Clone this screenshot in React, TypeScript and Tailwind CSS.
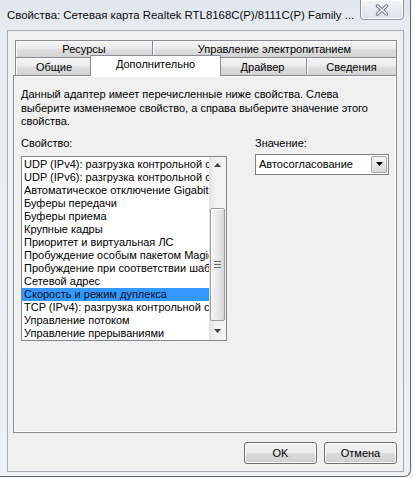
import React from "react";

const items = [
  "UDP (IPv4): разгрузка контрольной суммы",
  "UDP (IPv6): разгрузка контрольной суммы",
  "Автоматическое отключение Gigabit",
  "Буферы передачи",
  "Буферы приема",
  "Крупные кадры",
  "Приоритет и виртуальная ЛС",
  "Пробуждение особым пакетом Magic Packet",
  "Пробуждение при соответствии шаблону",
  "Сетевой адрес",
  "Скорость и режим дуплекса",
  "TCP (IPv4): разгрузка контрольной суммы",
  "Управление потоком",
  "Управление прерываниями",
];

function Tri({ up }: { up?: boolean }) {
  return (
    <svg width="7" height="4" viewBox="0 0 7 4">
      <polygon points={up ? "0,4 7,4 3.5,0" : "0,0 7,0 3.5,4"} fill="#3f3f3f" />
    </svg>
  );
}

const tabBg =
  "bg-[linear-gradient(#f5f5f5_0%,#ececec_45%,#dedede_55%,#d3d3d3_100%)] shadow-[inset_1px_1px_0_#fdfdfd]";

export default function App() {
  return (
    <div className="w-[413px] h-[478px] overflow-hidden bg-[#f4f6f8] font-['Liberation_Sans',Arial,sans-serif] text-[11px] text-black">
      <div className="w-[411px] h-[477px] flex flex-col bg-[linear-gradient(#dfe6ee,#eaeef3_40px,#edf0f4)] border-r border-b border-[#5f6873] rounded-br-[7px]">
        {/* Title bar */}
        <div className="h-[30px] shrink-0 flex items-start">
          <div className="flex-1 pl-[7px] pt-[8px] text-[11.4px] leading-[14px] whitespace-nowrap overflow-hidden text-[#0b0b0b]">
            Свойства: Сетевая карта Realtek RTL8168C(P)/8111C(P) Family ...
          </div>
          <div className="w-[44px] h-[21px] -mt-px mr-[6px] rounded-b-[4px] border border-[#8c96a2] bg-[linear-gradient(#f4f6f9,#e6ebf1_50%,#dbe2ea)] shadow-[inset_0_0_0_1px_#fbfcfd] flex items-center justify-center">
            <svg width="14" height="12" viewBox="0 0 14 12">
              <path d="M2.5 2 L11.5 10 M11.5 2 L2.5 10" stroke="#6f7882" strokeWidth="3.4" strokeLinecap="round" />
              <path d="M2.5 2 L11.5 10 M11.5 2 L2.5 10" stroke="#f3f4f6" strokeWidth="1.6" strokeLinecap="round" />
            </svg>
          </div>
        </div>

        {/* Client area */}
        <div className="ml-[7px] w-[397px] h-[442px] border border-[#a3aab3] bg-[#f0f0f0] flex flex-col">
          {/* Tabs */}
          <div className="mt-[9px] pl-[7px]">
            <div className="flex h-[17px]">
              <div className={`w-[138px] h-[17px] border-l border-t border-r border-[#898c95] ${tabBg} flex items-center justify-center leading-[14px]`}>
                Ресурсы
              </div>
              <div className={`-ml-px w-[245px] h-[17px] border-l border-t border-r border-[#898c95] ${tabBg} flex items-center justify-center leading-[14px]`}>
                Управление электропитанием
              </div>
            </div>
            <div className="flex h-[18px] items-start">
              <div className={`w-[78px] h-[18px] border-l border-t border-r border-[#898c95] ${tabBg} flex justify-center pt-[2px] leading-[14px]`}>
                Общие
              </div>
              <div className="relative z-10 -ml-[3px] -mt-[2px] w-[131px] h-[21px] border-l border-t border-r border-[#898c95] bg-white flex justify-center pt-[1px] leading-[14px]">
                Дополнительно
              </div>
              <div className={`-ml-[3px] w-[89px] h-[18px] border-l border-t border-r border-[#898c95] ${tabBg} flex justify-center pt-[2px] leading-[14px]`}>
                Драйвер
              </div>
              <div className={`-ml-px w-[91px] h-[18px] border-l border-t border-r border-[#898c95] ${tabBg} flex justify-center pt-[2px] leading-[14px]`}>
                Сведения
              </div>
            </div>
          </div>

          {/* Tab panel */}
          <div className="ml-[5px] w-[384px] h-[358px] shrink-0 border border-[#898c95] bg-[#f0f0f0] shadow-[inset_1px_1px_0_#ffffff,inset_-1px_-1px_0_#ffffff] pl-[7px] pt-[12px]">
            <div className="w-[355px] leading-[13.5px]">
              Данный адаптер имеет перечисленные ниже свойства. Слева выберите изменяемое свойство, а справа выберите значение этого свойства.
            </div>
            <div className="flex mt-[7px]">
              <div className="w-[206px] flex flex-col">
                <div className="leading-[14px]">Свойство:</div>
                <div className="mt-[6px] w-[206px] h-[185px] border border-[#828790] bg-white flex">
                  <div className="flex-1 min-w-0 pt-px overflow-hidden">
                    {items.map((t) => (
                      <div
                        key={t}
                        className={`h-[13px] leading-[13px] pl-[2px] whitespace-nowrap overflow-hidden ${
                          t === "Скорость и режим дуплекса" ? "bg-[#3399ff] text-[#0a1020]" : ""
                        }`}
                      >
                        {t}
                      </div>
                    ))}
                  </div>
                  <div className="w-[17px] flex flex-col bg-[linear-gradient(to_right,#e4e4e4,#f3f3f3_40%,#f3f3f3)]">
                    <div className="h-[17px] flex items-center justify-center">
                      <Tri up />
                    </div>
                    <div className="flex-1 pt-[34px]">
                      <div className="mx-px h-[113px] rounded-[2px] border border-[#9a9a9a] bg-[linear-gradient(to_right,#f4f4f4,#e8e8e8_50%,#d6d6d6)] shadow-[inset_1px_1px_0_#ffffff] flex flex-col items-center justify-center gap-[2px]">
                        <div className="w-[7px] h-px bg-[#6b6b6b]" />
                        <div className="w-[7px] h-px bg-[#6b6b6b]" />
                        <div className="w-[7px] h-px bg-[#6b6b6b]" />
                      </div>
                    </div>
                    <div className="h-[17px] flex items-center justify-center">
                      <Tri />
                    </div>
                  </div>
                </div>
              </div>
              <div className="ml-[28px] w-[134px] flex flex-col">
                <div className="leading-[14px]">Значение:</div>
                <div className="mt-[4px] w-[134px] h-[21px] border border-[#7b7f86] bg-white flex items-center">
                  <div className="flex-1 pl-[3px] leading-[14px] whitespace-nowrap overflow-hidden">Автосогласование</div>
                  <div className="w-[16px] h-[17px] mr-px border border-[#a5a5a5] rounded-[2px] bg-[linear-gradient(#f5f5f5,#e8e8e8_50%,#d6d6d6)] flex items-center justify-center">
                    <svg width="7" height="4" viewBox="0 0 7 4">
                      <polygon points="0,0 7,0 3.5,4" fill="#000" />
                    </svg>
                  </div>
                </div>
              </div>
            </div>
          </div>

          {/* Buttons */}
          <div className="mt-[9px] flex justify-end gap-[7px] pr-[6px]">
            <div className="w-[73px] h-[22px] rounded-[3px] border border-[#707070] bg-[linear-gradient(#f2f2f2_0%,#ebebeb_50%,#dddddd_50%,#cfcfcf_100%)] shadow-[inset_0_0_0_1px_#fcfcfc] flex items-center justify-center leading-[14px]">
              OK
            </div>
            <div className="w-[73px] h-[22px] rounded-[3px] border border-[#707070] bg-[linear-gradient(#f2f2f2_0%,#ebebeb_50%,#dddddd_50%,#cfcfcf_100%)] shadow-[inset_0_0_0_1px_#fcfcfc] flex items-center justify-center leading-[14px]">
              Отмена
            </div>
          </div>
        </div>
      </div>
    </div>
  );
}
